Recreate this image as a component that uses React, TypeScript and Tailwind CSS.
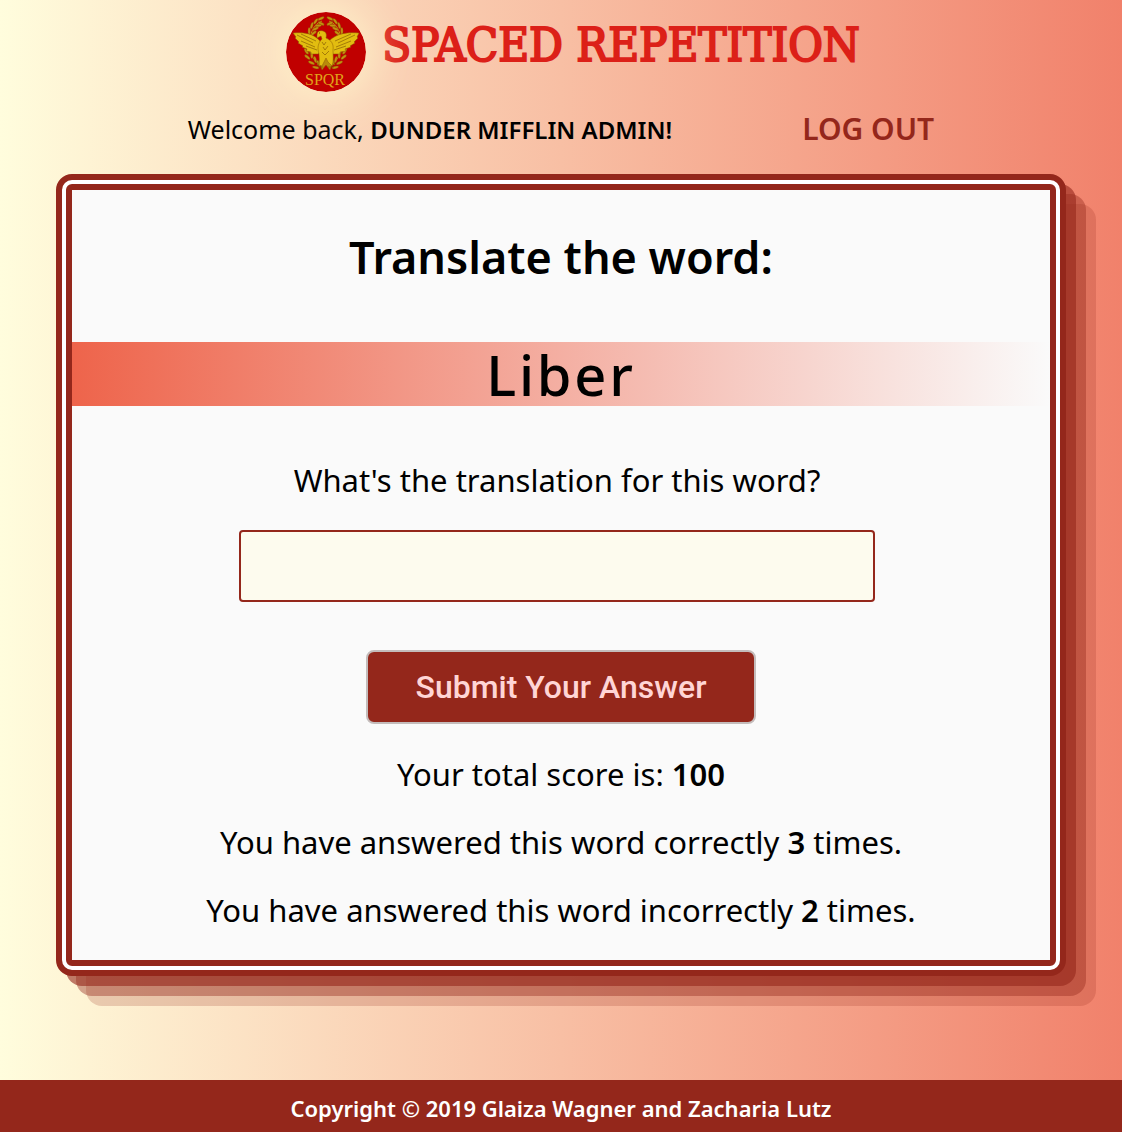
import React from "react";

const leaves = [
  [34, 9, 180], [30, 12, 150], [27, 16, 130], [25, 21, 115], [23, 40, 80],
  [24, 45, 65], [28, 50, 50], [32, 54, 35],
];

function Leaf({ x, y, r }: { x: number; y: number; r: number }) {
  return (
    <g transform={`translate(${x} ${y}) rotate(${r})`}>
      <ellipse cx="-2" cy="-1.8" rx="3.4" ry="1.3" transform="rotate(25)" />
      <ellipse cx="-2" cy="1.8" rx="3.4" ry="1.3" transform="rotate(-25)" />
    </g>
  );
}

function Laurel() {
  return (
    <g fill="#c4930f" stroke="#7a3a06" strokeWidth="0.3">
      <path d="M36 9C28 12 24 20 24 31C24 43 28 50 36 54" fill="none" stroke="#c9930f" strokeWidth="1" />
      {leaves.map(([x, y, r]) => (
        <Leaf key={y} x={x} y={y} r={r} />
      ))}
    </g>
  );
}

function Logo() {
  return (
    <svg viewBox="0 0 80 80" role="img" aria-label="SPQR eagle" className="relative z-10 size-20 shrink-0 rounded-full shadow-[0_0_50px_#fffacd]">
      <circle cx="40" cy="40" r="40" fill="#c00000" />
      <Laurel />
      <g transform="translate(79 0) scale(-1 1)">
        <Laurel />
      </g>
      <g fill="#e2bd10" stroke="#8a5a05" strokeWidth="0.5" strokeLinejoin="round">
        <path d="M34 29C27 21 17 20 7 21L10 25L9 26L13 30L12 31L17 34L16 35L21 37L20 39L25 40L25 42L32 42L37 38Z" />
        <path d="M43 29C51 21 62 20 73 21L71 25L72 26L68 30L69 31L64 34L65 35L59 37L60 39L54 40L54 42L47 42L42 38Z" />
        <path d="M35 44L31 53L34 52L36 58L40 53L44 58L46 52L49 53L45 44Z" fill="#b98a0c" />
        <path d="M31 23C31 19 34 18 37 19C40 20 41 22 40 26C45 28 48 32 47 38C47 43 48 49 46 54L42 50L40 46L36 54L33 53C34 49 33 46 33 42C31 36 32 31 36 27L35 24L31 26Z" />
      </g>
      <g fill="none" stroke="#7a5004" strokeWidth="0.6">
        <path d="M11 23L27 31M15 22L30 29M15 29L29 35M20 34L31 38M69 23L52 31M65 22L49 29M65 29L50 35M60 34L48 38" />
        <path d="M36 30L38 33L40 30M37 35L39 38L42 34M36 40L39 43L43 39M32 55H37M42 55H48" />
        <path d="M33 21H34" strokeWidth="1" />
      </g>
      <text x="39" y="73" textAnchor="middle" fontFamily="Liberation Serif, serif" fontSize="16" fill="#e0a21a">
        SPQR
      </text>
    </svg>
  );
}

export default function App() {
  return (
    <div className="flex min-h-screen flex-col bg-linear-to-r/srgb from-[#fffddd] to-[#f1816b] font-['Noto_Sans',sans-serif] text-black">
      <header className="pt-3">
        <div className="flex items-start justify-center gap-4 pl-6">
          <Logo />
          <h1 className="font-['DejaVu_Serif_Condensed','DejaVu_Serif',serif] text-[47px] leading-[66px] text-[#dc2018] [-webkit-text-stroke:2px_#dc2018]">SPACED REPETITION</h1>
        </div>
        <nav className="flex items-center justify-center gap-[130px] pt-3">
          <p className="text-[25px] leading-[50px]">
            Welcome back, <strong className="text-2xl leading-6 font-semibold">DUNDER MIFFLIN ADMIN!</strong>
          </p>
          <a href="#logout" className="text-3xl leading-[50px] font-semibold text-[#94271b]">LOG OUT</a>
        </nav>
      </header>

      <main className="mx-14 mt-5 mb-26 rounded-2xl border-6 border-[#94271b] bg-white p-1 text-center shadow-[10px_10px_0_rgba(148,39,27,0.6),20px_20px_0_rgba(148,39,27,0.4),30px_30px_0_rgba(148,39,27,0.2)]">
        <div className="rounded-md border-6 border-[#94271b] bg-[#fafafa] pt-8 pb-[18px]">
          <h2 className="text-[45px] leading-[70px] font-semibold">Translate the word:</h2>
          <p className="mt-[50px] bg-linear-to-r/srgb from-[#ee644b] to-[#fafafa] text-[56px] leading-16 font-medium tracking-wider">Liber</p>
          <form className="flex flex-col items-center" onSubmit={(e) => e.preventDefault()}>
            <label htmlFor="answer" className="mt-12 pr-2 text-[31px] leading-[52px]">What's the translation for this word?</label>
            <input
              id="answer"
              type="text"
              className="mt-6 mr-2 h-18 w-[65%] rounded border-2 border-[#94271b] bg-[#fdfbee] px-4 text-3xl"
            />
            <button type="submit" className="mt-12 h-[74px] rounded-lg border-2 border-[#c4bcbb] bg-[#94271b] px-12 font-[Roboto,sans-serif] text-[32px] font-medium text-[#ffd5d5]">
              Submit Your Answer
            </button>
          </form>
          <div className="mt-[18px] text-[31px] leading-[64px]">
            <p>Your total score is: <strong className="font-semibold">100</strong></p>
            <p className="mt-1">You have answered this word correctly <strong className="font-semibold">3</strong> times.</p>
            <p className="mt-1">You have answered this word incorrectly <strong className="font-semibold">2</strong> times.</p>
          </div>
        </div>
      </main>

      <footer className="mt-auto bg-[#94271b] pt-2.5 pb-1.5 text-center text-[22px] leading-9 font-semibold text-white">
        Copyright © 2019 Glaiza Wagner and Zacharia Lutz
      </footer>
    </div>
  );
}
